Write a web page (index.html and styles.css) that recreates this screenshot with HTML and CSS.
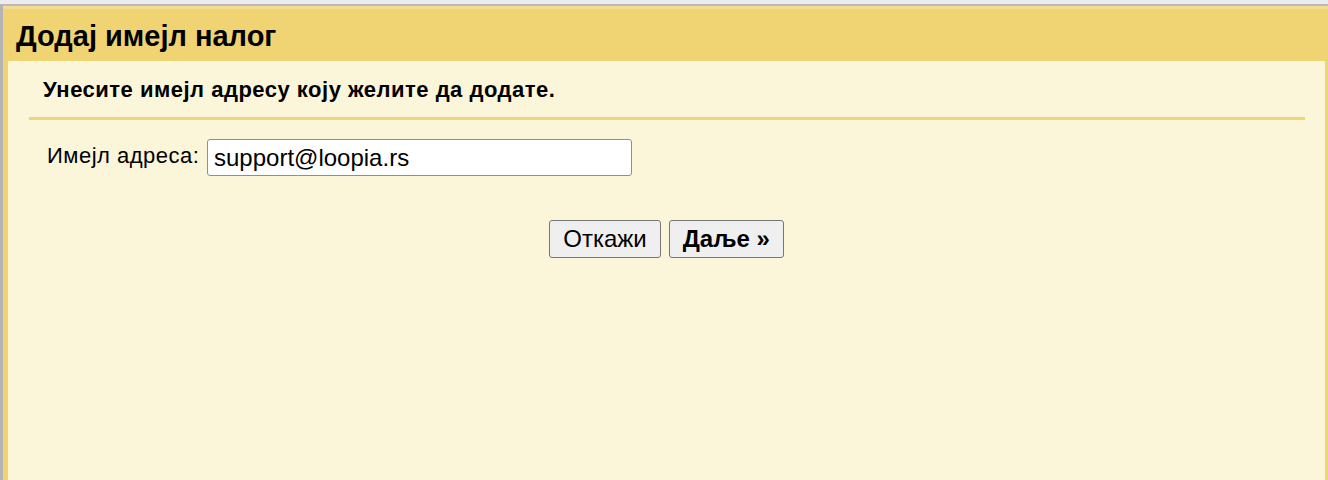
FILE: index.html
```html
<!DOCTYPE html>
<html lang="sr">
<head>
  <meta charset="UTF-8">
  <meta name="viewport" content="width=device-width, initial-scale=1.0">
  <title>Додај имејл налог</title>
  <link rel="stylesheet" href="styles.css">
</head>
<body>
  <div class="window-frame">
    <div class="dialog">
      <h1 class="dialog-title">Додај имејл налог</h1>
      <div class="dialog-body">
        <h2 class="step-title">Унесите имејл адресу коју желите да додате.</h2>
        <div class="step-rule"></div>
        <div class="form-row">
          <label class="form-label" for="email">Имејл адреса:</label>
          <input class="form-input" id="email" type="text" value="support@loopia.rs">
        </div>
        <div class="button-row">
          <button class="btn">Откажи</button>
          <button class="btn btn-primary">Даље »</button>
        </div>
      </div>
    </div>
  </div>
</body>
</html>
```

FILE: styles.css
```css
html, body {
  height: 100%;
}

body {
  margin: 0;
  background-color: #ececf0;
  font-family: 'Liberation Sans', Arial, sans-serif;
  color: #000;
  overflow: hidden;
}

.window-frame {
  margin-top: 4px;
  height: calc(100% - 4px);
  border-top: 2px solid #b9b9b9;
  border-left: 3px solid #b4b4b4;
  box-sizing: border-box;
}

.dialog {
  height: 100%;
  display: flex;
  flex-direction: column;
  background-color: #f0d373;
  border-top: 3px solid #f4dd92;
  padding: 0 3px 0 5px;
  box-sizing: border-box;
}

.dialog-title {
  margin: 0;
  height: 52px;
  line-height: 54px;
  padding-left: 8px;
  font-size: 29px;
  font-weight: bold;
}

.dialog-body {
  flex: 1;
  background-color: #fbf5d9;
  padding-top: 16px;
}

.step-title {
  margin: 0 0 0 35px;
  font-size: 22px;
  letter-spacing: 0.5px;
  line-height: 26px;
  font-weight: bold;
}

.step-rule {
  margin: 14px 20px 0 21px;
  height: 3px;
  background-color: #efd575;
}

.form-row {
  display: flex;
  align-items: flex-start;
  gap: 7px;
  margin: 19px 0 0 39px;
}

.form-label {
  width: 153px;
  padding-top: 4px;
  font-size: 22px;
  letter-spacing: 0.5px;
  line-height: 26px;
  white-space: nowrap;
}

.form-input {
  width: 425px;
  height: 37px;
  box-sizing: border-box;
  margin: 0;
  padding: 0 6px;
  border: 1px solid #8f8f8f;
  border-radius: 3px;
  background-color: #fff;
  font-family: 'Liberation Sans', Arial, sans-serif;
  font-size: 24px;
  color: #000;
}

.button-row {
  display: flex;
  justify-content: center;
  gap: 8px;
  margin-top: 44px;
}

.btn {
  height: 38px;
  margin: 0;
  padding: 0 13px;
  border: 1px solid #767676;
  border-radius: 3px;
  background-color: #efefef;
  font-family: 'Liberation Sans', Arial, sans-serif;
  font-size: 24px;
  color: #000;
}

.btn-primary {
  font-weight: bold;
}
```
